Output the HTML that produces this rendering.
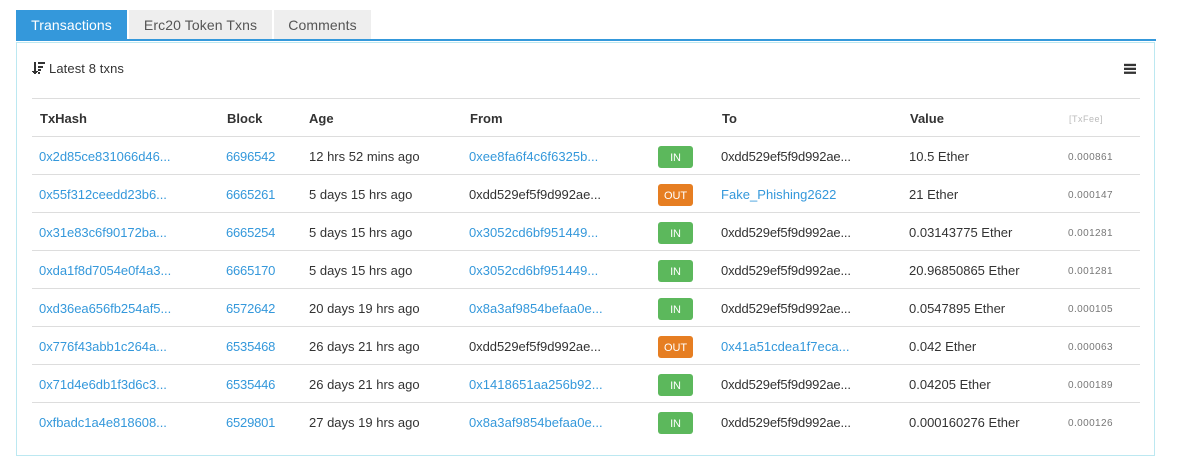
<!DOCTYPE html>
<html><head><meta charset="utf-8"><style>
html,body{margin:0;padding:0;background:#fff}
body{position:relative;width:1188px;height:474px;overflow:hidden;font-family:"Liberation Sans",sans-serif;font-size:13px;color:#333;letter-spacing:0}
div,a{position:absolute;white-space:nowrap}
.tab{top:10px;height:29px;line-height:30px;text-align:center;background:#eee;color:#555;font-size:14px;letter-spacing:.1px}
.l{left:32px;width:1108px;height:1px;background:#ddd}
.h{top:100px;line-height:37px;font-weight:bold;letter-spacing:0}
.r{left:0;width:1188px;height:37px}
.r div{top:1px;line-height:38px}
.c1{left:39px;color:#3498db;letter-spacing:-.04px}.c2{left:226px;color:#3498db;letter-spacing:-.2px}.c3{left:309px}.c4{left:469px;letter-spacing:-.05px}.c6{left:721px;letter-spacing:-.15px}.c7{left:909px}
.c8{left:1068px;color:#777;font-size:10px;letter-spacing:.4px;top:2px!important}
.lk{color:#3498db;letter-spacing:.03px}
.b{left:658px;top:9px!important;width:35px;height:22px;line-height:24px!important;border-radius:3px;color:#fff;text-align:center;font-size:11px;letter-spacing:-.1px}
.in{background:#5cb85c}.out{background:#e67e22}
</style></head><body>
<div class="tab" style="left:16px;width:111px;height:31px;background:#3498db;color:#fff">Transactions</div>
<div class="tab" style="left:129px;width:143px">Erc20 Token Txns</div>
<div class="tab" style="left:274px;width:97px">Comments</div>
<div style="left:16px;top:39px;width:1140px;height:2px;background:#3498db"></div>
<div style="left:16px;top:42px;width:1137px;height:412px;border:1.5px solid #bce8f1"></div>
<svg style="position:absolute;left:32px;top:62px" width="14" height="14" shape-rendering="crispEdges"><rect x="2" y="0" width="2" height="11" fill="#333"/><path d="M0 9h6v1h-1v1h-1v1h-2v-1h-1v-1h-1z" fill="#333"/><rect x="6" y="0" width="7" height="2" fill="#333"/><rect x="6" y="4" width="5" height="2" fill="#333"/><rect x="6" y="7" width="3" height="2" fill="#333"/><rect x="6" y="10" width="2" height="2" fill="#333"/></svg>
<div style="left:49px;top:60px;line-height:18px;letter-spacing:.1px">Latest 8 txns</div>
<svg style="position:absolute;left:1124px;top:63px" width="12" height="12"><rect y=".8" width="12" height="2.3" fill="#333"/><rect y="4.7" width="12" height="2.3" fill="#333"/><rect y="8.6" width="12" height="2.3" fill="#333"/></svg>
<div class="l" style="top:98px"></div>
<div class="h" style="left:40px">TxHash</div><div class="h" style="left:227px">Block</div><div class="h" style="left:309px">Age</div><div class="h" style="left:470px">From</div><div class="h" style="left:722px">To</div><div class="h" style="left:910px">Value</div>
<div style="left:1069px;top:100px;line-height:39px;font-size:9px;color:#bbb;letter-spacing:.5px">[TxFee]</div>
<div class="l" style="top:136px"></div><div class="l" style="top:174px"></div><div class="l" style="top:212px"></div><div class="l" style="top:250px"></div><div class="l" style="top:288px"></div><div class="l" style="top:326px"></div><div class="l" style="top:364px"></div><div class="l" style="top:402px"></div>
<div class="r" style="top:137px"><div class="c1">0x2d85ce831066d46...</div><div class="c2">6696542</div><div class="c3">12 hrs 52 mins ago</div><div class="c4 lk">0xee8fa6f4c6f6325b...</div><div class="b in">IN</div><div class="c6">0xdd529ef5f9d992ae...</div><div class="c7">10.5 Ether</div><div class="c8">0.000861</div></div>
<div class="r" style="top:175px"><div class="c1">0x55f312ceedd23b6...</div><div class="c2">6665261</div><div class="c3">5 days 15 hrs ago</div><div class="c4">0xdd529ef5f9d992ae...</div><div class="b out">OUT</div><div class="c6 lk">Fake_Phishing2622</div><div class="c7">21 Ether</div><div class="c8">0.000147</div></div>
<div class="r" style="top:213px"><div class="c1">0x31e83c6f90172ba...</div><div class="c2">6665254</div><div class="c3">5 days 15 hrs ago</div><div class="c4 lk">0x3052cd6bf951449...</div><div class="b in">IN</div><div class="c6">0xdd529ef5f9d992ae...</div><div class="c7">0.03143775 Ether</div><div class="c8">0.001281</div></div>
<div class="r" style="top:251px"><div class="c1">0xda1f8d7054e0f4a3...</div><div class="c2">6665170</div><div class="c3">5 days 15 hrs ago</div><div class="c4 lk">0x3052cd6bf951449...</div><div class="b in">IN</div><div class="c6">0xdd529ef5f9d992ae...</div><div class="c7">20.96850865 Ether</div><div class="c8">0.001281</div></div>
<div class="r" style="top:289px"><div class="c1">0xd36ea656fb254af5...</div><div class="c2">6572642</div><div class="c3">20 days 19 hrs ago</div><div class="c4 lk">0x8a3af9854befaa0e...</div><div class="b in">IN</div><div class="c6">0xdd529ef5f9d992ae...</div><div class="c7">0.0547895 Ether</div><div class="c8">0.000105</div></div>
<div class="r" style="top:327px"><div class="c1">0x776f43abb1c264a...</div><div class="c2">6535468</div><div class="c3">26 days 21 hrs ago</div><div class="c4">0xdd529ef5f9d992ae...</div><div class="b out">OUT</div><div class="c6 lk">0x41a51cdea1f7eca...</div><div class="c7">0.042 Ether</div><div class="c8">0.000063</div></div>
<div class="r" style="top:365px"><div class="c1">0x71d4e6db1f3d6c3...</div><div class="c2">6535446</div><div class="c3">26 days 21 hrs ago</div><div class="c4 lk">0x1418651aa256b92...</div><div class="b in">IN</div><div class="c6">0xdd529ef5f9d992ae...</div><div class="c7">0.04205 Ether</div><div class="c8">0.000189</div></div>
<div class="r" style="top:403px"><div class="c1">0xfbadc1a4e818608...</div><div class="c2">6529801</div><div class="c3">27 days 19 hrs ago</div><div class="c4 lk">0x8a3af9854befaa0e...</div><div class="b in">IN</div><div class="c6">0xdd529ef5f9d992ae...</div><div class="c7">0.000160276 Ether</div><div class="c8">0.000126</div></div>
</body></html>
